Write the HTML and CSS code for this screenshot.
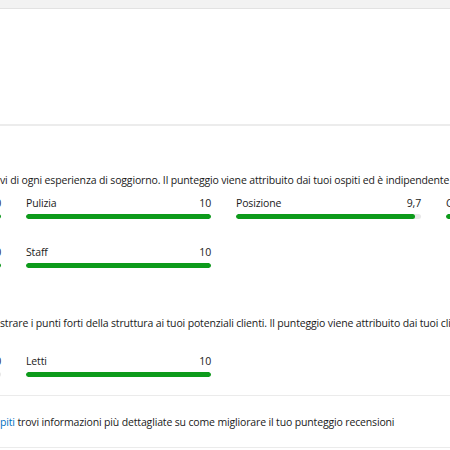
FILE: index.html
```html
<!DOCTYPE html>
<html lang="it">
<head>
<meta charset="utf-8">
<title>Punteggio recensioni</title>
<link rel="stylesheet" href="styles.css">
</head>
<body>
<div class="topbar"></div>
<div class="card"></div>
<section class="section first">
  <p class="intro">vi di ogni esperienza di soggiorno. Il punteggio viene attribuito dai tuoi ospiti ed è indipendente dalle altre strutture</p>
  <div class="grid">
    <div class="item"><div class="head"><span>Servizi</span><span>10</span></div><div class="track"><div class="fill" style="width:100%"></div></div></div>
    <div class="item"><div class="head"><span>Pulizia</span><span>10</span></div><div class="track"><div class="fill" style="width:100%"></div></div></div>
    <div class="item"><div class="head"><span>Posizione</span><span>9,7</span></div><div class="track"><div class="fill" style="width:97%"></div></div></div>
    <div class="item"><div class="head"><span>Comfort</span><span>10</span></div><div class="track"><div class="fill" style="width:100%"></div></div></div>
    <div class="item"><div class="head"><span>Rapporto qualità-prezzo</span><span>10</span></div><div class="track"><div class="fill" style="width:100%"></div></div></div>
    <div class="item"><div class="head"><span>Staff</span><span>10</span></div><div class="track"><div class="fill" style="width:100%"></div></div></div>
  </div>
</section>
<section class="section second">
  <p class="intro">strare i punti forti della struttura ai tuoi potenziali clienti. Il punteggio viene attribuito dai tuoi clienti</p>
  <div class="grid">
    <div class="item"><div class="head"><span>Colazione</span><span>9,0</span></div><div class="track"><div class="fill" style="width:90%"></div></div></div>
    <div class="item"><div class="head"><span>Letti</span><span>10</span></div><div class="track"><div class="fill" style="width:100%"></div></div></div>
  </div>
</section>
<div class="footer">
  <p class="note"><a href="#" class="link">piti</a> trovi informazioni più dettagliate su come migliorare il tuo punteggio recensioni</p>
</div>
</body>
</html>
```

FILE: styles.css
```css
html, body {
  margin: 0;
  padding: 0;
  background: #ffffff;
}
body {
  width: 450px;
  height: 450px;
  overflow: hidden;
  font-family: "Open Sans", "Noto Sans", sans-serif;
  font-size: 10.5px;
  letter-spacing: -0.15px;
  line-height: 16px;
  color: #1a1a1a;
}
.topbar {
  height: 8px;
  background: #f2f2f2;
  border-bottom: 1px solid #e2e2e2;
}
.card {
  height: 115px;
  background: #ffffff;
  border-bottom: 2px solid #ececec;
}
.section {
  white-space: nowrap;
}
.first {
  padding-top: 46px;
}
.second {
  padding-top: 47px;
  padding-bottom: 18px;
  border-bottom: 1px solid #ebebeb;
}
.intro {
  margin: 0;
  white-space: nowrap;
}
.grid {
  display: grid;
  grid-template-columns: repeat(4, 185px);
  column-gap: 25px;
  row-gap: 25px;
  margin-left: -184px;
  margin-top: 7px;
  width: 900px;
}
.second .grid {
  margin-top: 22px;
}
.head {
  display: flex;
  justify-content: space-between;
}
.track {
  margin-top: 3px;
  height: 5px;
  background: #e8e8e8;
  border-radius: 3px;
  overflow: hidden;
}
.fill {
  height: 100%;
  background: #0d9b1b;
  border-radius: 3px;
}
.footer {
  padding: 18px 0 17px;
  border-bottom: 1px solid #ebebeb;
}
.note {
  margin: 0;
  white-space: nowrap;
}
.link {
  color: #0071c2;
  text-decoration: none;
}
```
